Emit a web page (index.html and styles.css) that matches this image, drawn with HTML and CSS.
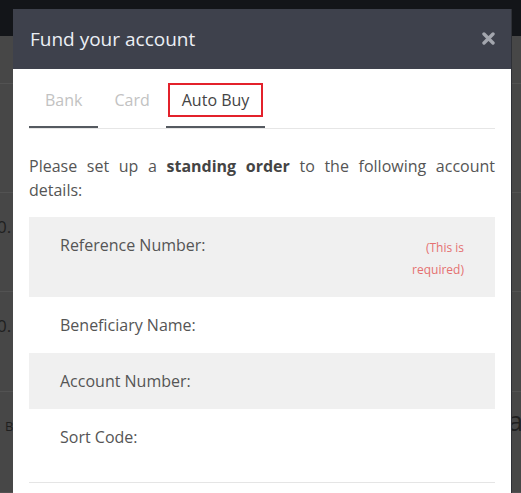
FILE: index.html
```html
<!DOCTYPE html>
<html lang="en">
<head>
<meta charset="utf-8">
<title>Fund your account</title>
<link rel="stylesheet" href="styles.css">
</head>
<body>
<div class="page">
  <div class="topbar"></div>
  <div class="bg-row r1"></div>
  <div class="bg-row r2"></div>
  <div class="bg-row r3"><span class="bg-num">0.</span></div>
  <div class="bg-row r4"><span class="bg-num">0.</span></div>
  <div class="bg-row r5"><span class="bg-b">B</span><span class="bg-a">a</span></div>
</div>

<div class="modal">
  <div class="modal-header">
    <h4 class="modal-title">Fund your account</h4>
    <span class="close" aria-label="Close">
      <svg width="13" height="13" viewBox="0 0 13 13"><path d="M2 2 L11 11 M11 2 L2 11" stroke="#a3a6ae" stroke-width="3.4" stroke-linecap="round"/></svg>
    </span>
  </div>
  <div class="modal-body">
    <ul class="tabs">
      <li class="tab underlined"><a><span class="tab-label">Bank</span></a></li>
      <li class="tab"><a><span class="tab-label">Card</span></a></li>
      <li class="tab underlined active"><a><span class="tab-label boxed">Auto Buy</span></a></li>
    </ul>
    <p class="intro">Please set up a <strong>standing order</strong> to the following account details:</p>
    <div class="details">
      <div class="row shaded">
        <div class="label">Reference Number:</div>
        <div class="required">(This is required)</div>
      </div>
      <div class="row">
        <div class="label">Beneficiary Name:</div>
      </div>
      <div class="row shaded">
        <div class="label">Account Number:</div>
      </div>
      <div class="row">
        <div class="label">Sort Code:</div>
      </div>
    </div>
    <div class="rule"></div>
  </div>
</div>
</body>
</html>
```

FILE: styles.css
```css
html, body {
  margin: 0;
  padding: 0;
}
body {
  background: #474747;
  font-family: "Open Sans", "DejaVu Sans", sans-serif;
  width: 521px;
  height: 493px;
  overflow: hidden;
}
.page {
  display: flex;
  flex-direction: column;
}
.topbar {
  height: 36px;
  background: #131519;
}
.bg-row {
  border-bottom: 1px solid #525252;
  position: relative;
  color: #1f1f1f;
}
.r1 { height: 47px; }
.r2 { height: 108px; }
.r3 { height: 98px; }
.r4 { height: 99px; }
.r5 { height: 100px; }
.bg-num {
  display: block;
  margin-top: 24px;
  margin-left: -3px;
  font-size: 17px;
  line-height: 20px;
}
.bg-b {
  position: absolute;
  left: 5px;
  top: 25px;
  font-size: 13px;
}
.bg-a {
  position: absolute;
  left: 508px;
  top: 14px;
  font-size: 27px;
  line-height: 30px;
}

.modal {
  position: absolute;
  left: 13px;
  top: 9px;
  width: 498px;
  height: 500px;
  background: #fff;
  box-shadow: 1px 0 0 #2e3036;
}
.modal-header {
  height: 60px;
  background: #3e414c;
  display: flex;
  align-items: center;
  justify-content: space-between;
  padding: 0 16px 0 17px;
}
.modal-title {
  margin: 0;
  font-size: 19px;
  font-weight: 400;
  color: #eceff5;
  line-height: 24px;
}
.close {
  display: flex;
  width: 13px;
  height: 13px;
  margin-top: -1px;
}
.modal-body {
  padding: 0 16px;
}
.tabs {
  list-style: none;
  margin: 0;
  padding: 0;
  display: flex;
  border-bottom: 1px solid #e6e6e6;
}
.tab {
  padding: 0;
}
.tab a {
  display: block;
  padding: 14px 2px 9px;
  border-bottom: 2px solid transparent;
  font-size: 16px;
  color: #c2c2c2;
}
.tab.underlined a {
  border-bottom-color: #555a60;
}
.tab.active a {
  color: #444;
}
.tab-label {
  display: block;
  padding: 0 12px;
  line-height: 30px;
  border: 2px solid transparent;
}
.tab-label.boxed {
  border-color: #e3212b;
}
.intro {
  margin: 25px 0 15px;
  font-size: 16px;
  line-height: 24px;
  color: #555;
  text-align: justify;
}
.intro strong {
  font-weight: 700;
  color: #444;
}
.row {
  display: flex;
  justify-content: space-between;
  padding: 16px 31px;
}
.row.shaded {
  background: #f0f0f0;
}
.label {
  font-size: 16px;
  line-height: 24px;
  color: #555;
}
.required {
  width: 60px;
  text-align: right;
  font-size: 12px;
  line-height: 22px;
  padding-top: 4px;
  color: #e57171;
}
.rule {
  margin-top: 17px;
  border-top: 1px solid #e5e5e5;
}
```
